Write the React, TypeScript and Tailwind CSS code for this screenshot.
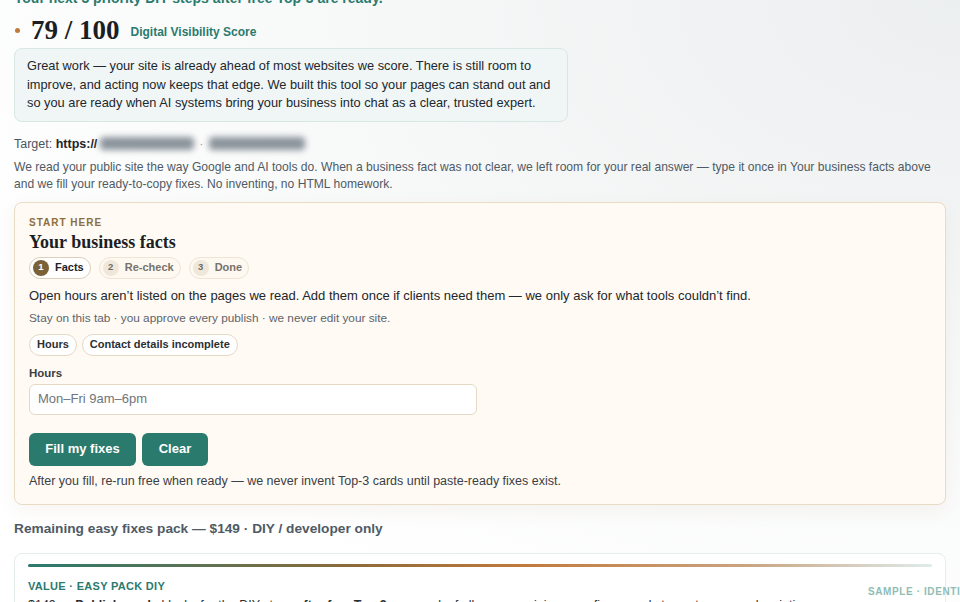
import React from "react";

export default function App() {
  return (
    <div className="relative h-[602px] w-[960px] overflow-hidden bg-[radial-gradient(ellipse_at_top_right,#eceff0_0%,#f7f8f8_45%,#ffffff_80%)] px-[14px] font-['Liberation_Sans','Helvetica',sans-serif] text-[#1f2328]">
      <p className="-mt-[12px] text-[14px] font-bold leading-[20px] text-[#2a7a6e]">
        Your next 3 priority DIY steps after free Top-3 are ready.
      </p>

      <div className="mt-[6px] flex h-[32px] items-center">
        <span className="ml-[1px] h-[5px] w-[5px] rounded-full bg-[#c27a3c]" />
        <span className="ml-[11px] font-['Liberation_Serif','Times_New_Roman',serif] text-[27px] font-bold leading-[32px] text-[#1b1f24]">
          79 / 100
        </span>
        <span className="ml-[11px] mt-[3px] text-[12px] font-semibold text-[#2a7a6e]">Digital Visibility Score</span>
      </div>

      <div className="mt-[2px] w-[554px] rounded-[8px] border border-[#d8e7e4] bg-[#f0f6f5] px-[12px] py-[8px] text-[12.8px] leading-[18.5px] text-[#22272d]">
        Great work — your site is already ahead of most websites we score. There is still room to improve, and acting now keeps that edge. We built this tool so your pages can stand out and so you are ready when AI systems bring your business into chat as a clear, trusted expert.
      </div>

      <div className="mt-[13px] flex items-center text-[12.5px] leading-[18px] text-[#4b5560]">
        <span>Target:&nbsp;</span>
        <span className="font-bold text-[#1f2328]">https://</span>
        <span className="ml-[3px] h-[13px] w-[94px] rounded-[4px] bg-[#8a939b] blur-[3px]" />
        <span className="mx-[5px] text-[#9aa3aa]">·</span>
        <span className="h-[13px] w-[96px] rounded-[4px] bg-[#8a939b] blur-[3px]" />
      </div>

      <p className="mt-[6px] text-[12.1px] leading-[17px] text-[#4f5a64]">
        We read your public site the way Google and AI tools do. When a business fact was not clear, we left room for your real answer — type it once in Your business facts above and we fill your ready-to-copy fixes. No inventing, no HTML homework.
      </p>

      <div className="mt-[9px] w-[932px] rounded-[8px] border border-[#eadbc5] bg-[#fffaf3] px-[14px] pb-[14px] pt-[14px] shadow-[0_6px_20px_rgba(120,90,40,0.06)]">
        <div className="text-[10px] font-bold leading-[12px] tracking-[1px] text-[#8b6f3e]">START HERE</div>
        <div className="mt-[2px] font-['Liberation_Serif','Times_New_Roman',serif] text-[18px] font-bold leading-[22px] text-[#1b1f24]">
          Your business facts
        </div>
        <div className="mt-[4px] flex gap-[8px]">
          <div className="flex h-[22px] items-center rounded-full border border-[#dcd0bd] bg-white pl-[3px] pr-[6px]">
            <span className="flex h-[16px] w-[16px] items-center justify-center rounded-full bg-[#7b6236] text-[9.5px] font-bold text-white">1</span>
            <span className="ml-[6px] text-[11px] font-bold text-[#1f2328]">Facts</span>
          </div>
          <div className="flex h-[22px] items-center rounded-full border border-[#efe5d6] bg-[#fdf8f0] pl-[3px] pr-[6px]">
            <span className="flex h-[16px] w-[16px] items-center justify-center rounded-full bg-[#efe7da] text-[9.5px] font-bold text-[#6f6a62]">2</span>
            <span className="ml-[6px] text-[11px] font-bold text-[#77726b]">Re-check</span>
          </div>
          <div className="flex h-[22px] items-center rounded-full border border-[#efe5d6] bg-[#fdf8f0] pl-[3px] pr-[6px]">
            <span className="flex h-[16px] w-[16px] items-center justify-center rounded-full bg-[#efe7da] text-[9.5px] font-bold text-[#6f6a62]">3</span>
            <span className="ml-[6px] text-[11px] font-bold text-[#77726b]">Done</span>
          </div>
        </div>
        <p className="mt-[8px] text-[13px] leading-[18px] text-[#22272d]">
          Open hours aren’t listed on the pages we read. Add them once if clients need them — we only ask for what tools couldn’t find.
        </p>
        <p className="mt-[5px] text-[11.8px] leading-[16px] text-[#5d646b]">
          Stay on this tab · you approve every publish · we never edit your site.
        </p>
        <div className="mt-[8px] flex gap-[5px]">
          <span className="flex h-[22px] items-center rounded-full border border-[#e5d9c6] bg-white px-[7px] text-[11px] font-bold text-[#2b2f34]">Hours</span>
          <span className="flex h-[22px] items-center rounded-full border border-[#e5d9c6] bg-white px-[7px] text-[11px] font-bold text-[#2b2f34]">Contact details incomplete</span>
        </div>
        <div className="mt-[9px] text-[11.5px] font-bold leading-[16px] text-[#3b3f44]">Hours</div>
        <div className="mt-[3px] flex h-[31px] w-[448px] items-center rounded-[6px] border border-[#e5d9c5] bg-white px-[8px] text-[13px] text-[#70757b]">
          Mon–Fri 9am–6pm
        </div>
        <div className="mt-[18px] flex gap-[6px]">
          <button className="h-[33px] w-[107px] rounded-[6px] bg-[#2a7a6e] text-[13px] font-bold text-white">Fill my fixes</button>
          <button className="h-[33px] w-[66px] rounded-[6px] bg-[#2a7a6e] text-[13px] font-bold text-white">Clear</button>
        </div>
        <p className="mt-[7px] text-[12.5px] leading-[17px] text-[#3b4046]">
          After you fill, re-run free when ready — we never invent Top-3 cards until paste-ready fixes exist.
        </p>
      </div>

      <h2 className="mt-[14px] text-[13.7px] font-bold leading-[20px] text-[#4f5a64]">
        Remaining easy fixes pack — $149 · DIY / developer only
      </h2>

      <div className="mt-[14px] w-[932px] rounded-[8px] border border-[#e7ecec] bg-white px-[13px] pt-[10px]">
        <div className="h-[3px] w-full rounded-full bg-[linear-gradient(90deg,#2a7a6e_0%,#8a6a3a_35%,#c27a3c_55%,#c9a583_80%,#dfeceb_100%)]" />
        <div className="mt-[12px] text-[11px] font-bold leading-[14px] tracking-[0.3px] text-[#2a7a6e]">VALUE · EASY PACK DIY</div>
        <p className="mt-[3px] whitespace-nowrap text-[12.5px] leading-[18px] text-[#2b2f34]">
          $149 — <b>Publish-ready</b> blocks for the DIY steps <b>after free Top-3</b>: one pack of all your remaining easy fixes, ready to paste — no subscription.
        </p>
      </div>

      <div className="absolute left-[868px] top-[584px] whitespace-nowrap text-[10px] font-bold tracking-[0.6px] text-[#8fbdb6]">
        SAMPLE · IDENTITY
      </div>
    </div>
  );
}
